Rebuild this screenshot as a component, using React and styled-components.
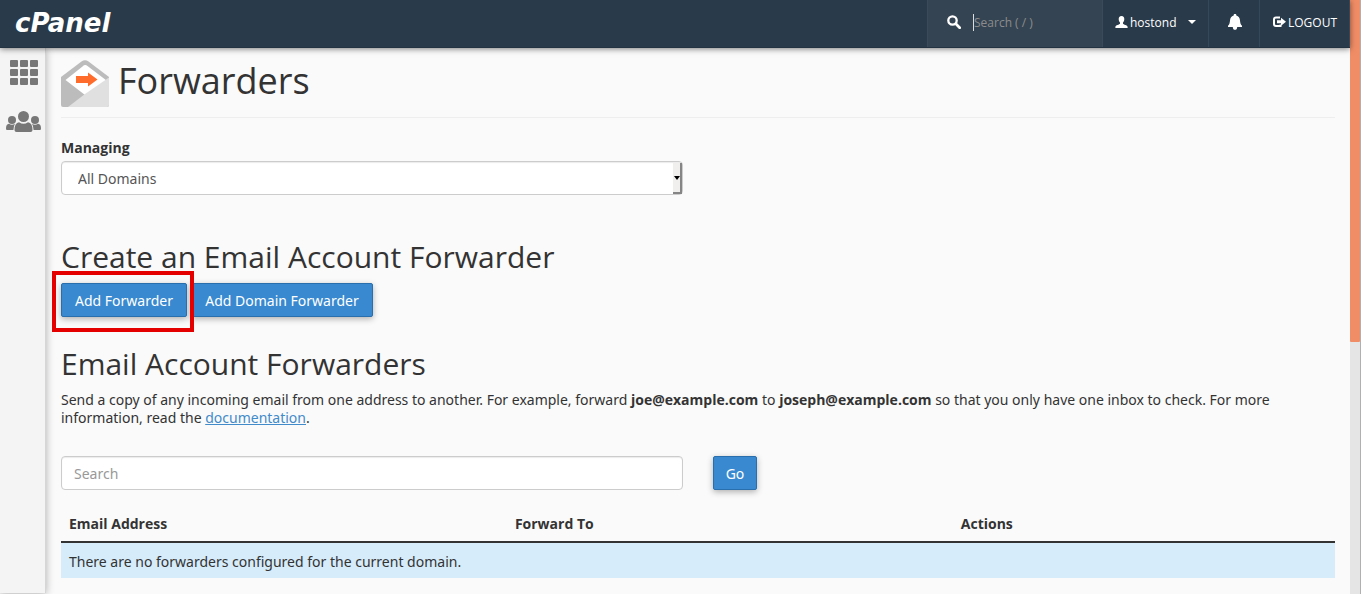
import { useState } from "react";
import styled, { createGlobalStyle } from "styled-components";

const GlobalStyle = createGlobalStyle`
  * {
    box-sizing: border-box;
  }

  body {
    margin: 0;
    background: #fafafa;
    color: #333;
    font-family: "Noto Sans", "Open Sans", sans-serif;
    font-size: 14px;
    line-height: 18px;
  }

  h1, h2, b, th, label, header {
    font-family: "Open Sans", sans-serif;
  }

  button, input, select {
    font-family: inherit;
    font-size: inherit;
  }
`;

const Page = styled.div`
  display: grid;
  grid-template-columns: 1fr 11px;
  height: 100vh;
  overflow: hidden;
`;

const Window = styled.div`
  display: flex;
  flex-direction: column;
  min-width: 0;
`;

const TopBar = styled.header`
  display: flex;
  align-items: stretch;
  flex: none;
  height: 48px;
  background: #293a4a;
  border-bottom: 1px solid #243342;
  box-shadow: 0 1px 6px rgba(0, 0, 0, 0.5);
  color: #fff;
  font-size: 12px;
  z-index: 2;
`;

const Brand = styled.a`
  display: flex;
  align-items: center;
  margin-right: auto;
  padding: 0 0 2px 15px;
  color: #fff;
  font: italic bold 26px "DejaVu Sans", sans-serif;
  text-decoration: none;
`;

const QuickSearch = styled.label`
  display: flex;
  align-items: center;
  gap: 12px;
  width: 176px;
  padding: 0 10px 3px 19px;
  background: #354453;
  border-left: 1px solid #3b4a59;
  border-right: 1px solid #3b4a59;
`;

const QuickInput = styled.input`
  flex: 1;
  min-width: 0;
  height: 17px;
  padding: 0;
  border: 0;
  border-left: 1px solid #ddd;
  outline: 0;
  background: transparent;
  color: #fff;

  &::placeholder {
    color: #8c8c8c;
    opacity: 1;
  }
`;

const BarButton = styled.button`
  display: flex;
  align-items: center;
  justify-content: ${({ $center }) => ($center ? "center" : "flex-start")};
  gap: 2px;
  width: ${({ $width }) => $width}px;
  padding: 0 0 3px ${({ $center }) => ($center ? 2 : 12)}px;
  border: 0;
  border-right: 1px solid #34485b;
  background: transparent;
  color: #fff;
  white-space: nowrap;
  cursor: pointer;
`;

const Caret = styled.span`
  margin-left: 9px;
  border: 4px solid transparent;
  border-top-color: #fff;
  border-bottom: 0;
`;

const Body = styled.div`
  display: flex;
  flex: 1;
  min-height: 0;
`;

const SideNav = styled.nav`
  display: flex;
  flex-direction: column;
  align-items: center;
  gap: 26px;
  flex: none;
  width: 46px;
  margin-bottom: 1px;
  padding: 12px 0 0 2px;
  background: #f4f4f4;
  border-right: 1px solid #d6d6d6;
  box-shadow: 0 1px 8px rgba(0, 0, 0, 0.3);
  z-index: 1;
`;

const SideLink = styled.a`
  display: block;
  color: #777;

  svg {
    display: block;
  }
`;

const Main = styled.main`
  flex: 1;
  min-width: 0;
  padding: 12px 15px 0;
`;

const PageTitle = styled.h1`
  display: flex;
  align-items: center;
  gap: 9px;
  margin: 0 0 21px;
  padding-bottom: 9px;
  border-bottom: 1px solid #eee;
  font-size: 36px;
  font-weight: 400;
  line-height: 48px;

  span {
    padding-bottom: 6px;
    line-height: 42px;
  }
`;

const FieldLabel = styled.label`
  display: block;
  margin-bottom: 4px;
  font-weight: 700;
`;

const Columns = styled.div`
  display: grid;
  grid-template-columns: 1fr 1fr;
  column-gap: 30px;
  justify-items: start;
`;

const SelectBox = styled.div`
  position: relative;
  width: 100%;
`;

const Select = styled.select`
  display: block;
  width: 100%;
  height: 34px;
  padding: 0 16px;
  border: 1px solid #ccc;
  border-radius: 4px;
  background: #fff;
  color: #555;
  appearance: none;
  box-shadow: inset 0 1px 1px rgba(0, 0, 0, 0.08);
`;

const SelectArrow = styled.span`
  position: absolute;
  top: 2px;
  right: 1px;
  bottom: 1px;
  display: flex;
  align-items: center;
  justify-content: flex-end;
  width: 9px;
  border-right: 2px solid #858585;
  border-bottom: 2px solid #858585;
  background: #f0efee;
  pointer-events: none;

  &::after {
    content: "";
    border: 3px solid transparent;
    border-top: 4px solid #000;
    border-bottom: 0;
  }
`;

const SectionTitle = styled.h2`
  margin: 0;
  font-size: 30px;
  font-weight: 400;
  line-height: 34px;
`;

const Section = styled.section`
  margin-top: ${({ $top }) => $top}px;
`;

const ButtonRow = styled.div`
  display: flex;
  gap: 4px;
  margin-top: 9px;
`;

const Highlight = styled.div`
  position: relative;

  &::after {
    content: "";
    position: absolute;
    inset: -12px -7px -15px -9px;
    border: 4px solid #e50000;
    pointer-events: none;
    z-index: 1;
  }
`;

const PrimaryButton = styled.button`
  display: block;
  min-width: ${({ $minWidth = 44 }) => $minWidth}px;
  height: 34px;
  padding: 0 11px;
  border: 1px solid #2a6fad;
  border-radius: 2px;
  background: #3889cf;
  color: #fff;
  box-shadow: 0 2px 6px rgba(0, 0, 0, 0.3);
  cursor: pointer;
`;

const Description = styled.p`
  margin: 10px 0 29px;

  a {
    color: #428bca;
  }
`;

const SearchInput = styled.input`
  width: 100%;
  height: 34px;
  padding: 0 12px;
  border: 1px solid #ccc;
  border-radius: 4px;
  background: #fff;
  color: #555;
  box-shadow: inset 0 1px 1px rgba(0, 0, 0, 0.08);

  &::placeholder {
    color: #999;
    opacity: 1;
  }
`;

const Table = styled.table`
  width: 100%;
  margin-top: 15px;
  border-collapse: separate;
  border-spacing: 0;
  table-layout: fixed;

  th {
    width: 35%;
    padding: 10px 8px 8px;
    border-bottom: 2px solid #333;
    text-align: left;
  }

  th:last-child {
    width: 30%;
  }

  td {
    padding: 10px 8px 7px;
    background: #d6ecfa;
  }
`;

const ScrollTrack = styled.div`
  border-right: 1px solid #b0b0b0;
  background: #e5e5e5;
`;

const ScrollThumb = styled.div`
  height: 342px;
  border-radius: 0 0 1px 1px;
  background: #f08d66;
`;

const SearchIcon = () => (
  <svg width="14" height="14" viewBox="0 0 14 14" fill="none" stroke="#fff">
    <circle cx="5.5" cy="5.5" r="4.2" strokeWidth="2.3" />
    <path d="M8.8 8.8l3.9 3.9" strokeWidth="2.7" strokeLinecap="round" />
  </svg>
);

const UserIcon = () => (
  <svg width="13" height="12" viewBox="0 0 13 12" fill="#fff">
    <path d="M6.5 0C8.500 0 9.400 1.300 9.300 3.200C9.200 4.900 8.600 5.900 8 6.500V7.800C8.300 8.700 12.600 9.100 12.600 11V12H.4V11C.4 9.100 4.700 8.700 5 7.800V6.500C4.400 5.900 3.800 4.900 3.700 3.200C3.600 1.300 4.500 0 6.500 0Z" />
  </svg>
);

const BellIcon = () => (
  <svg width="14" height="16" viewBox="0 0 14 16" fill="#fff">
    <path d="M7 0C7.900 0 8.400.5 8.300 1.400C10.700 2 11.700 3.700 11.900 5.800C12.200 8.900 12.500 10.600 14 11.700V13H0V11.700C1.500 10.600 1.800 8.900 2.100 5.800C2.300 3.700 3.300 2 5.700 1.400C5.600.5 6.100 0 7 0ZM4.800 13H9.200C9.200 15 8.200 15.800 7 15.800C5.800 15.800 4.800 15 4.800 13Z" />
  </svg>
);

const LogoutIcon = () => (
  <svg width="14" height="12" viewBox="0 0 14 12" fill="#fff">
    <path d="M8 1.500H4Q2 1.500 2 3.500V8Q2 10 4 10H8.500V8.500" fill="none" stroke="#fff" strokeWidth="2" />
    <path d="M5 4.300H9V1.800L14 5.800L9 9.800V7.300H5Z" />
  </svg>
);

const GridIcon = () => (
  <svg width="28" height="25" viewBox="0 0 28 25" fill="currentColor">
    {[0, 9, 18].map((y) =>
      [0, 10, 20].map((x) => (
        <rect key={`${x}-${y}`} x={x} y={y} width="8" height="7" rx="1" />
      ))
    )}
  </svg>
);

const UsersIcon = () => (
  <svg width="35" height="21" viewBox="0 0 35 21" fill="currentColor">
    <circle cx="17.500" cy="5.500" r="5.500" />
    <circle cx="6" cy="9" r="4" />
    <circle cx="29" cy="9" r="4" />
    <path d="M13 11.300Q17.500 14.300 22 11.300Q26.500 12 26.500 19Q26.500 21 24.500 21H10.500Q8.500 21 8.500 19Q8.500 12 13 11.300Z" />
    <path d="M3 12.700Q6 14.700 9 12.700Q7.500 15 7.400 19H1Q0 19 0 17.500Q0 13 3 12.700Z" />
    <path d="M32 12.700Q29 14.700 26 12.700Q27.500 15 27.600 19H34Q35 19 35 17.500Q35 13 32 12.700Z" />
  </svg>
);

const ForwarderIcon = () => (
  <svg width="48" height="48" viewBox="0 0 48 48">
    <path d="M0 17L20.500 1.500Q24 -1 27.500 1.500L48 17V45Q48 47 46 47H2Q0 47 0 45Z" fill="#bcbcbc" />
    <path d="M21.500 6.500Q24 4 26.500 6L45.500 20.500L24 35L4.500 20Z" fill="#fff" />
    <path d="M48 17.500V45Q48 47 46 47H7L24 34Z" fill="#e0e0e0" />
    <path d="M15 16H27V12.500L36.500 19.500L27 26.500V23H15Z" fill="#ff6c2c" />
  </svg>
);

const App = () => {
  const [domain, setDomain] = useState("all");
  const [search, setSearch] = useState("");

  return (
    <>
      <GlobalStyle />
      <Page>
        <Window>
          <TopBar>
            <Brand href="#">cPanel</Brand>
            <QuickSearch>
              <SearchIcon />
              <QuickInput type="text" placeholder="Search ( / )" aria-label="Quick search" />
            </QuickSearch>
            <BarButton type="button" $width={106}>
              <UserIcon />
              hostond
              <Caret />
            </BarButton>
            <BarButton type="button" $width={51} $center aria-label="Notifications">
              <BellIcon />
            </BarButton>
            <BarButton type="button" $width={90}>
              <LogoutIcon />
              LOGOUT
            </BarButton>
          </TopBar>
          <Body>
            <SideNav>
              <SideLink href="#" aria-label="Home">
                <GridIcon />
              </SideLink>
              <SideLink href="#" aria-label="User manager">
                <UsersIcon />
              </SideLink>
            </SideNav>
            <Main>
              <PageTitle>
                <ForwarderIcon />
                <span>Forwarders</span>
              </PageTitle>
              <FieldLabel htmlFor="managing">Managing</FieldLabel>
              <Columns>
                <SelectBox>
                  <Select
                    id="managing"
                    value={domain}
                    onChange={(event) => setDomain(event.target.value)}
                  >
                    <option value="all">All Domains</option>
                  </Select>
                  <SelectArrow />
                </SelectBox>
              </Columns>

              <Section $top={45}>
                <SectionTitle>Create an Email Account Forwarder</SectionTitle>
                <ButtonRow>
                  <Highlight>
                    <PrimaryButton type="button" $minWidth={126}>
                      Add Forwarder
                    </PrimaryButton>
                  </Highlight>
                  <PrimaryButton type="button" $minWidth={182}>
                    Add Domain Forwarder
                  </PrimaryButton>
                </ButtonRow>
              </Section>

              <Section $top={30}>
                <SectionTitle>Email Account Forwarders</SectionTitle>
                <Description>
                  Send a copy of any incoming email from one address to another. For
                  example, forward <b>joe@example.com</b> to <b>joseph@example.com</b>{" "}
                  so that you only have one inbox to check. For more information, read
                  the <a href="#">documentation</a>.
                </Description>
                <Columns>
                  <SearchInput
                    type="text"
                    placeholder="Search"
                    aria-label="Search forwarders"
                    value={search}
                    onChange={(event) => setSearch(event.target.value)}
                  />
                  <PrimaryButton type="button">Go</PrimaryButton>
                </Columns>
                <Table>
                  <thead>
                    <tr>
                      <th>Email Address</th>
                      <th>Forward To</th>
                      <th>Actions</th>
                    </tr>
                  </thead>
                  <tbody>
                    <tr>
                      <td colSpan={3}>
                        There are no forwarders configured for the current domain.
                      </td>
                    </tr>
                  </tbody>
                </Table>
              </Section>
            </Main>
          </Body>
        </Window>
        <ScrollTrack>
          <ScrollThumb />
        </ScrollTrack>
      </Page>
    </>
  );
};

export default App;
